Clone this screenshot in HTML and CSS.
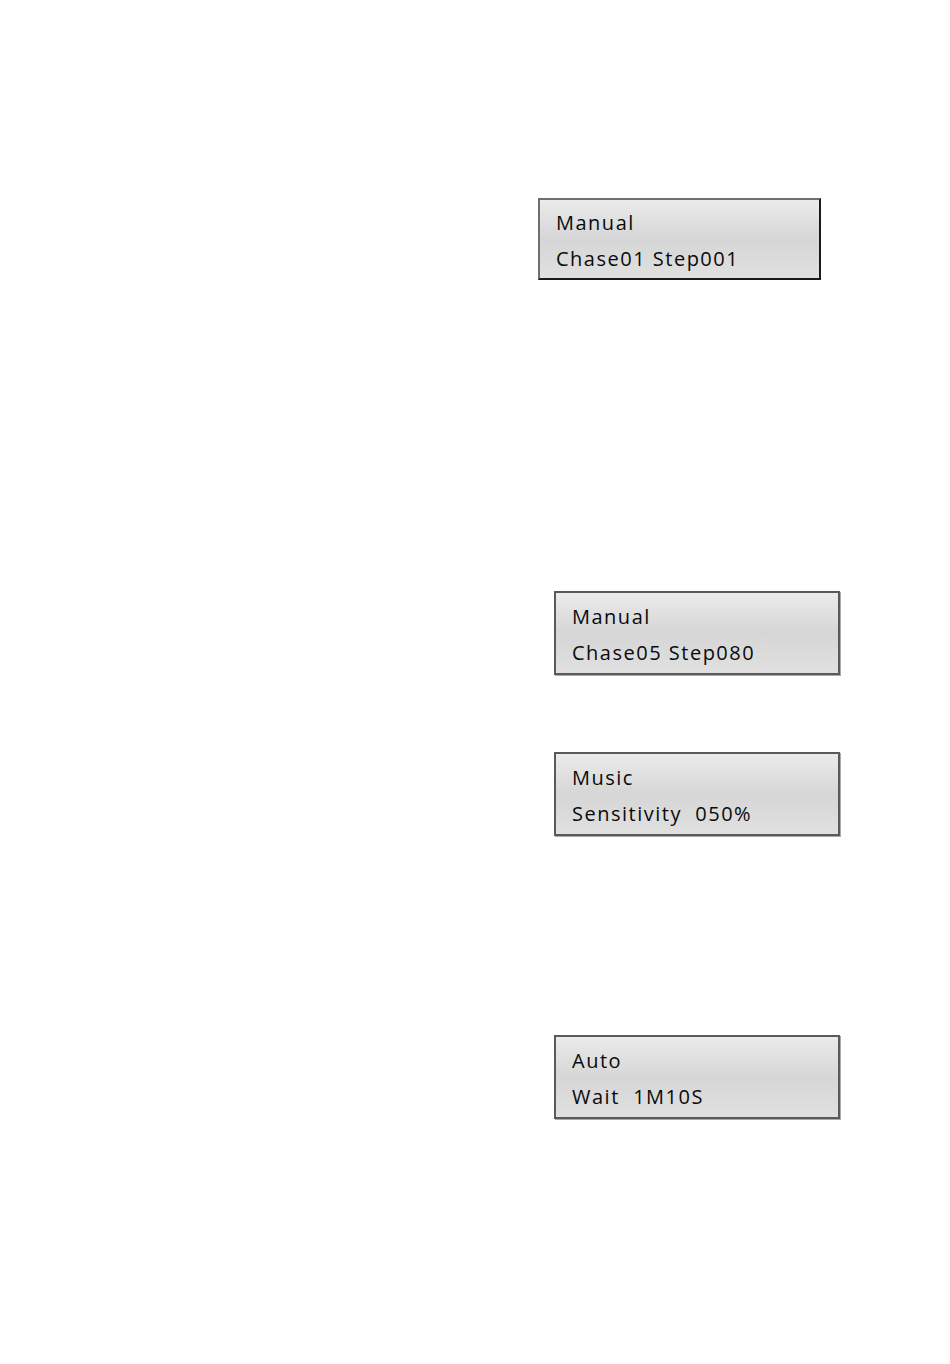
FILE: index.html
```html
<!DOCTYPE html>
<html lang="en">
<head>
    <meta charset="UTF-8">
    <meta name="viewport" content="width=device-width, initial-scale=1.0">
    <title>LCD Display</title>
    <link rel="stylesheet" href="styles.css">
</head>
<body>

<div class="page">
    <!-- Manual mode -->
    <div class="lcd lcd-first">
        <div class="line">Manual</div>
        <div class="line">Chase01 Step001</div>
    </div>

    <div class="lcd lcd-second">
        <div class="line">Manual</div>
        <div class="line">Chase05 Step080</div>
    </div>

    <!-- Music mode -->
    <div class="lcd lcd-music">
        <div class="line">Music</div>
        <div class="line">Sensitivity&nbsp; 050%</div>
    </div>

    <!-- Auto mode -->
    <div class="lcd lcd-auto">
        <div class="line">Auto</div>
        <div class="line">Wait&nbsp; 1M10S</div>
    </div>
</div>

</body>
</html>
```

FILE: styles.css
```css
body {
    font-family: "Open Sans", "Liberation Sans", sans-serif;
    margin: 0;
    padding: 0;
    background-color: #ffffff;
}
.page {
    display: flex;
    flex-direction: column;
    align-items: flex-start;
    height: 1364px;
}
.lcd {
    box-sizing: border-box;
    display: flex;
    flex-direction: column;
    justify-content: center;
    gap: 6px;
    padding-left: 16px;
    padding-top: 3px;
    color: #0a0a0a;
    background: linear-gradient(to bottom, #ebebeb 0%, #d6d6d6 50%, #e0e0e0 100%);
    border-top: 2px solid #6e6e6e;
    border-left: 2px solid #6e6e6e;
    border-right: 2px solid #333;
    border-bottom: 2px solid #333;
}
.line {
    font-size: 20px;
    font-weight: 500;
    line-height: 30px;
    letter-spacing: 1.5px;
}
.lcd-first {
    margin-top: 198px;
    margin-left: 538px;
    width: 283px;
    height: 82px;
    border-right-color: #1a1a1a;
    border-bottom-color: #1a1a1a;
}
.lcd-second {
    margin-top: 311px;
    margin-left: 554px;
    width: 286px;
    height: 84px;
    border-color: #5a5a5a;
    box-shadow: 1px 1px 0 #aaa;
}
.lcd-music {
    margin-top: 77px;
    margin-left: 554px;
    width: 286px;
    height: 84px;
    border-color: #5a5a5a;
    box-shadow: 1px 1px 0 #aaa;
}
.lcd-auto {
    margin-top: 199px;
    margin-left: 554px;
    width: 286px;
    height: 84px;
    border-color: #5a5a5a;
    box-shadow: 1px 1px 0 #aaa;
}
```
